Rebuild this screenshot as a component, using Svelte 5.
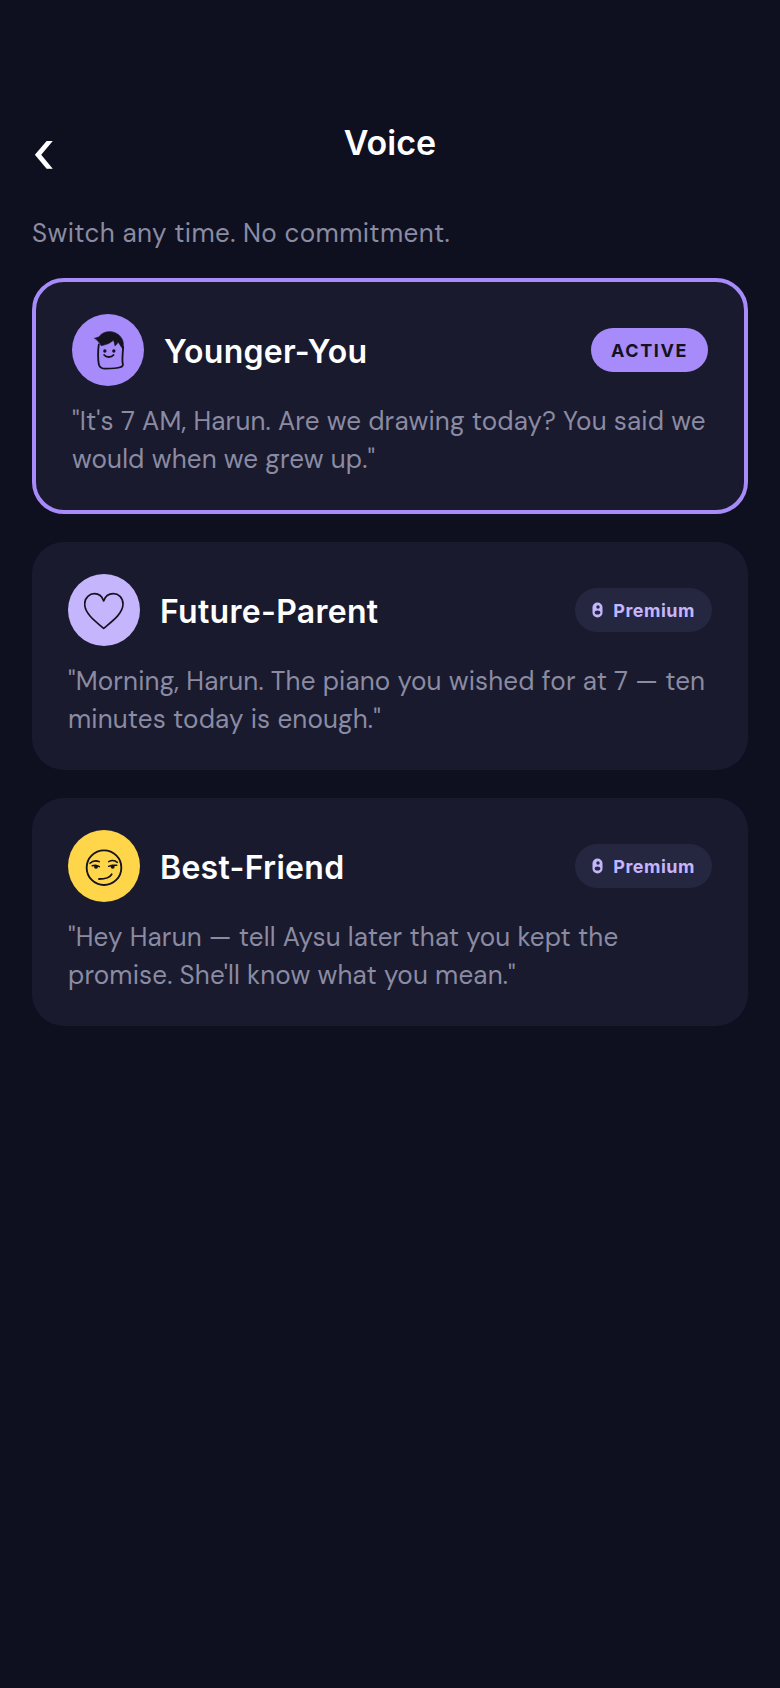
<script lang="ts">
  const voices = [
    {
      name: "Younger-You",
      quote: "\"It's 7 AM, Harun. Are we drawing today? You said we would when we grew up.\"",
      color: "#a78bfa",
      icon: "kid",
      active: true
    },
    {
      name: "Future-Parent",
      quote: "\"Morning, Harun. The piano you wished for at 7 — ten minutes today is enough.\"",
      color: "#c4b5fd",
      icon: "heart",
      active: false
    },
    {
      name: "Best-Friend",
      quote: "\"Hey Harun — tell Aysu later that you kept the promise. She'll know what you mean.\"",
      color: "#ffd54a",
      icon: "smirk",
      active: false
    }
  ];
</script>

<main class="screen">
  <header class="top">
    <button class="back" aria-label="Back">‹</button>
    <h1>Voice</h1>
    <span></span>
  </header>

  <p class="sub">Switch any time. No commitment.</p>

  <div class="list">
    {#each voices as v}
      <section class="card" class:active={v.active}>
        <div class="row">
          <div class="avatar" style="background: {v.color}">
            {#if v.icon === "kid"}
              <svg width="40" height="40" viewBox="7.500 15 120 120" fill="none" stroke="#14121f" stroke-width="5.500" stroke-linecap="round" stroke-linejoin="round">
                <path d="M40 58 C37 75 37 105 40 118 C42 127 50 131 60 131 C75 131 95 130 106 126 C113 124 113 118 111 112 C110 98 112 80 113 66" />
                <path fill="#14121f" stroke-width="2" d="M28 40 L40 36 C48 24 62 19 76 20 C96 22 110 36 113 52 C114 60 113 68 112 72 C106 64 102 56 97 50 C96 56 92 60 88 62 C88 56 86 50 83 46 C76 54 60 60 47 62 C43 54 36 46 28 40 Z" />
                <circle cx="58" cy="78" r="5" fill="#14121f" stroke="none" />
                <circle cx="85" cy="78" r="5" fill="#14121f" stroke="none" />
                <path d="M56 90 C62 98 78 98 84 90" />
              </svg>
            {:else if v.icon === "heart"}
              <svg width="40" height="40" viewBox="72 73 120 120" fill="none" stroke="#14121f" stroke-width="5" stroke-linejoin="round">
                <path d="M131 188 C110 170 74 145 74 115 C74 95 90 84 103 84 C117 84 127 93 131 106 C135 93 146 84 160 84 C175 84 189 95 189 115 C189 145 152 170 131 188 Z" />
              </svg>
            {:else}
              <svg width="40" height="40" viewBox="72 75 120 120" fill="none" stroke="#14121f" stroke-width="5.500" stroke-linecap="round">
                <circle cx="132" cy="140" r="52" />
                <path d="M90 127 C97 120 108 118 118 122" stroke-width="4.500" />
                <path d="M146 122 C154 118 165 118 172 124" stroke-width="4.500" />
                <path d="M97 134 C103 132 112 133 118 137" stroke-width="4.500" />
                <path d="M146 136 C152 133 162 132 170 133" stroke-width="4.500" />
                <circle cx="108" cy="137" r="6" fill="#14121f" stroke="none" />
                <circle cx="158" cy="137" r="6" fill="#14121f" stroke="none" />
                <path d="M117 174 C130 174 148 173 155 160" />
              </svg>
            {/if}
          </div>
          <h2>{v.name}</h2>
          {#if v.active}
            <span class="badge on">ACTIVE</span>
          {:else}
            <span class="badge locked">
              <svg width="11" height="16" viewBox="0 0 11 16">
                <rect x="0.500" y="0.500" width="10" height="15" rx="5" fill="#c4b5fd" />
                <circle cx="6" cy="5" r="1.700" fill="#252640" />
                <ellipse cx="5.500" cy="10.500" rx="2.800" ry="2" fill="#252640" />
              </svg>
              Premium
            </span>
          {/if}
        </div>
        <p class="quote">{v.quote}</p>
      </section>
    {/each}
  </div>
</main>

<style>
  :global(body) {
    margin: 0;
    background: #0e101f;
  }

  .screen {
    box-sizing: border-box;
    height: 1688px;
    padding: 121px 32px 0;
    background: #0e101f;
    font-family: "DM Sans", "Open Sans", sans-serif;
  }

  .top {
    display: grid;
    grid-template-columns: 1fr auto 1fr;
    height: 48px;
  }

  .back {
    justify-self: start;
    height: 54px;
    padding: 6px 0 0;
    border: 0;
    background: none;
    color: #fff;
    font-family: Inter, sans-serif;
    font-size: 60px;
    line-height: 48px;
    font-weight: 400;
  }

  h1 {
    margin: 0;
    color: #fff;
    font-family: Inter, sans-serif;
    font-size: 34px;
    line-height: 44px;
    font-weight: 600;
  }

  .sub {
    margin: 46px 0 0;
    color: #8b8ba3;
    font-size: 26px;
    line-height: 36px;
    letter-spacing: 0.4px;
  }

  .list {
    display: flex;
    flex-direction: column;
    gap: 28px;
    margin-top: 27px;
  }

  .card {
    padding: 32px 36px;
    border-radius: 32px;
    background: #191a2d;
  }

  .card.active {
    border: 4px solid #a78bfa;
  }

  .row {
    display: flex;
    align-items: center;
    gap: 20px;
  }

  .avatar {
    flex: none;
    display: flex;
    align-items: center;
    justify-content: center;
    width: 72px;
    height: 72px;
    border-radius: 50%;
  }

  h2 {
    flex: 1;
    margin: 0;
    padding-top: 4px;
    color: #fff;
    font-family: Inter, sans-serif;
    font-size: 32px;
    line-height: 44px;
    font-weight: 600;
    letter-spacing: 0.3px;
  }

  .badge {
    display: flex;
    align-items: center;
    height: 44px;
    border-radius: 22px;
    font-family: Inter, sans-serif;
    font-size: 18px;
    font-weight: 700;
  }

  .on {
    padding: 0 20px;
    background: #a78bfa;
    color: #14121f;
    letter-spacing: 1.6px;
  }

  .locked {
    gap: 10px;
    padding: 0 17px;
    background: #252640;
    color: #c4b5fd;
    letter-spacing: 0.5px;
  }

  .quote {
    margin: 16px 0 0;
    color: #8b8ba3;
    font-size: 26px;
    line-height: 38px;
    letter-spacing: 0.16px;
  }
</style>
